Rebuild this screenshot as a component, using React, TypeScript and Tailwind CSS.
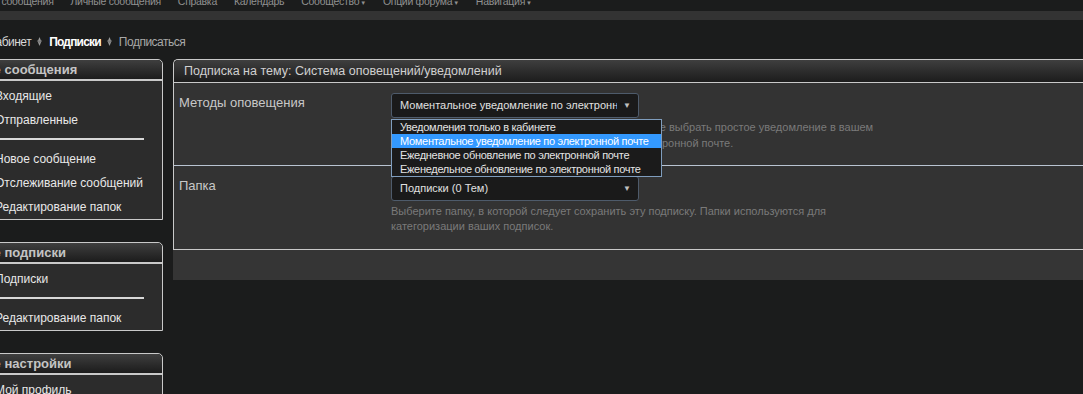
const font = { fontFamily: '"Liberation Sans", Arial, sans-serif' };

const navItems = [
  { t: 'Кабинет сообщения', d: false },
  { t: 'Личные сообщения', d: false },
  { t: 'Справка', d: false },
  { t: 'Календарь', d: false },
  { t: 'Сообщество', d: true },
  { t: 'Опции форума', d: true },
  { t: 'Навигация', d: true },
];

function Arrow() {
  return (
    <svg className="w-[9px] h-[9px] ml-[4px] mr-[5px]" viewBox="0 0 10 10">
      <path d="M5 0 L7 5 L5 10 L3 5 Z" fill="#9a9a9a" />
      <path d="M2 4 L8 4 L5 7 Z" fill="#7a7a7a" />
    </svg>
  );
}

function SideBlock({ title, groups }: { title: string; groups: string[][] }) {
  return (
    <div className="border border-[#c9c9c9] rounded-tr-[5px] mb-[22px]">
      <div className="h-[21px] bg-gradient-to-b from-[#3f3f3f] to-[#1c1c1c] rounded-tr-[5px] pl-[6px] flex items-center text-[13px] font-bold text-[#c4c4c4] border-b-2 border-[#c9c9c9]">
        {title}
      </div>
      <div className="bg-[#2c2c2c] pl-[51px] pt-[3px]">
        {groups.map((g, gi) => (
          <div key={gi}>
            {gi > 0 && <div className="h-[2px] bg-[#d8d8d8] w-[149px] mt-[6px] mb-[7px]" />}
            {g.map((t) => (
              <div key={t} className="h-[24px] flex items-center text-[12px] text-[#e8e8e8] whitespace-nowrap">{t}</div>
            ))}
          </div>
        ))}
      </div>
    </div>
  );
}

function Select({ value }: { value: string }) {
  return (
    <div className="w-[248px] h-[25px] bg-[#1a1a1a] border border-[#4e5b6b] rounded-[3px] flex items-center pl-[8px] pr-[7px] text-[11px] text-[#e0e0e0]">
      <span className="flex-1 overflow-hidden whitespace-nowrap">{value}</span>
      <span className="text-[8px] text-[#c0c0c0] ml-[6px]">▼</span>
    </div>
  );
}

export default function App() {
  return (
    <div className="w-[1083px] h-[394px] overflow-hidden bg-[#1b1c1c]" style={font}>
      <div className="h-[11px] overflow-hidden flex text-[10.5px] text-[#909090] gap-[17px] -ml-[39px]">
        {navItems.map((n) => (
          <span key={n.t} className="whitespace-nowrap leading-[12px] -mt-[5px] tracking-[-0.3px]">
            {n.t}
            {n.d && <span className="text-[6px] ml-[1px]">▼</span>}
          </span>
        ))}
      </div>
      <div className="h-[9px] bg-[#333333]" />
      <div className="h-[39px] flex items-center text-[12px] tracking-[-0.5px] -ml-[11px] pt-[4px]">
        <span className="text-[#d8d8d8]">Кабинет</span>
        <Arrow />
        <span className="text-white font-bold tracking-[-0.8px]">Подписки</span>
        <Arrow />
        <span className="text-[#a8a8a8]">Подписаться</span>
      </div>
      <div className="flex gap-[10px] -ml-[57px]">
        <div className="w-[220px] shrink-0">
          <SideBlock title="Личные сообщения" groups={[['Входящие', 'Отправленные'], ['Новое сообщение', 'Отслеживание сообщений', 'Редактирование папок']]} />
          <SideBlock title="Личные подписки" groups={[['Подписки'], ['Редактирование папок']]} />
          <SideBlock title="Личные настройки" groups={[['Мой профиль', 'Аватар']]} />
        </div>
        <div className="w-[1000px] shrink-0">
          <div className="border-t border-l border-[#c9c9c9] rounded-tl-[5px]">
            <div className="h-[23px] bg-gradient-to-b from-[#3f3f3f] to-[#1c1c1c] rounded-tl-[5px] flex items-center pl-[10px] text-[12.5px] text-[#d0d0d0] border-b border-[#c9c9c9]">
              Подписка на тему: Система оповещений/уведомлений
            </div>
            <div className="bg-[#333333]">
              <div className="flex h-[83px] border-b border-[#b9c4d2] pl-[5px] pt-[10px]">
                <div className="w-[212px] text-[13px] text-[#c8c8c8]">Методы оповещения</div>
                <div className="relative">
                  <Select value="Моментальное уведомление по электронной почте" />
                  <div className="text-[11px] text-[#7a7a7a] leading-[16px] mt-[1px] whitespace-nowrap">
                    Выберите способ получения оповещений. Вы можете выбрать простое уведомление в вашем<br />
                    личном кабинете или получать оповещения по электронной почте.
                  </div>
                  <div className="absolute left-0 top-[26px] w-[271px] bg-[#1b1b1b] border border-[#7f9dbd] text-[11px] tracking-[-0.3px] text-[#e4e4e4] leading-[14px] whitespace-nowrap">
                    <div className="pl-[8px]">Уведомления только в кабинете</div>
                    <div className="pl-[8px] bg-[#3399ff] text-white">Моментальное уведомление по электронной почте</div>
                    <div className="pl-[8px]">Ежедневное обновление по электронной почте</div>
                    <div className="pl-[8px]">Еженедельное обновление по электронной почте</div>
                  </div>
                </div>
              </div>
            </div>
          </div>
          <div className="flex h-[84px] bg-[#333333] border-l border-b border-[#c9c9c9] pl-[5px] pt-[10px]">
            <div className="w-[212px] text-[13px] text-[#c8c8c8]">Папка</div>
            <div>
              <Select value="Подписки (0 Тем)" />
              <div className="text-[11px] text-[#7a7a7a] leading-[15px] mt-[3px] whitespace-nowrap">
                Выберите папку, в которой следует сохранить эту подписку. Папки используются для<br />
                категоризации ваших подписок.
              </div>
            </div>
          </div>
          <div className="h-[30px] bg-[#353535]" />
        </div>
      </div>
    </div>
  );
}
